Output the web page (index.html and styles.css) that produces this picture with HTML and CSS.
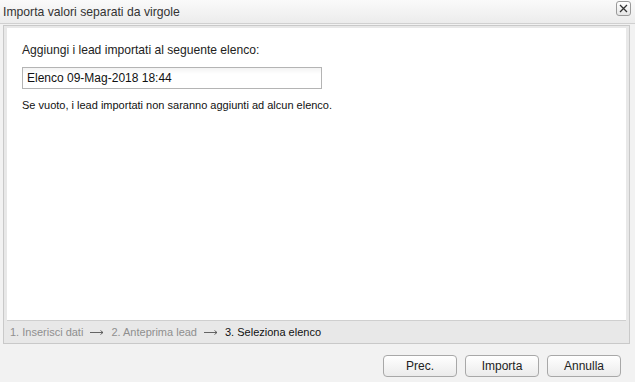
FILE: index.html
```html
<!DOCTYPE html>
<html lang="it">
<head>
    <meta charset="UTF-8">
    <meta name="viewport" content="width=device-width, initial-scale=1.0">
    <title>Importa valori separati da virgole</title>
    <link rel="stylesheet" href="styles.css">
</head>
<body>
    <div class="dialog">
        <div class="titlebar">
            <span class="title">Importa valori separati da virgole</span>
            <button class="close-btn" title="Chiudi">
                <svg width="9" height="9" viewBox="0 0 9 9">
                    <path d="M1 1 L8 8 M8 1 L1 8" stroke="#333" stroke-width="1.3" fill="none"/>
                </svg>
            </button>
        </div>
        <div class="panel">
            <div class="content">
                <label class="field-label" for="list-name">Aggiungi i lead importati al seguente elenco:</label>
                <input id="list-name" class="text-input" type="text" value="Elenco 09-Mag-2018 18:44">
                <p class="hint">Se vuoto, i lead importati non saranno aggiunti ad alcun elenco.</p>
            </div>
            <div class="steps">
                <span class="step done">1. Inserisci dati</span>
                <svg class="arrow" width="14" height="7" viewBox="0 0 14 7">
                    <path d="M0 3.5 H13 M10.5 1.5 L13 3.5 L10.5 5.5" stroke="#555" stroke-width="0.9" fill="none"/>
                </svg>
                <span class="step done">2. Anteprima lead</span>
                <svg class="arrow" width="14" height="7" viewBox="0 0 14 7">
                    <path d="M0 3.5 H13 M10.5 1.5 L13 3.5 L10.5 5.5" stroke="#555" stroke-width="0.9" fill="none"/>
                </svg>
                <span class="step current">3. Seleziona elenco</span>
            </div>
        </div>
        <div class="buttons">
            <button class="btn">Prec.</button>
            <button class="btn">Importa</button>
            <button class="btn">Annulla</button>
        </div>
    </div>
</body>
</html>
```

FILE: styles.css
```css
body {
    margin: 0;
    background: #f2f2f2;
    font-family: Tahoma, "Liberation Sans", Arial, sans-serif;
    color: #000;
}

.dialog {
    width: 635px;
    height: 382px;
    display: flex;
    flex-direction: column;
}

.titlebar {
    height: 24px;
    display: flex;
    align-items: center;
    justify-content: space-between;
    padding: 0 4px 0 3px;
    background: linear-gradient(#fafafa, #ececec);
    border-bottom: 1px solid #d0d0d0;
    box-sizing: border-box;
}

.title {
    font-size: 12.2px;
    color: #333;
}

.close-btn {
    width: 15px;
    height: 15px;
    padding: 0;
    display: flex;
    align-items: center;
    justify-content: center;
    border: 1px solid #9a9a9a;
    border-radius: 3px;
    background: linear-gradient(#ffffff, #e6e6e6);
    margin-top: -6px;
}

.panel {
    margin: 1px 5px 0 3px;
    border: 1px solid #c9c9c9;
    background: #e8e8e8;
    padding: 2px 3px 0 3px;
    display: flex;
    flex-direction: column;
    height: 319px;
    box-sizing: border-box;
}

.content {
    flex: 1;
    background: #fff;
    border-bottom: 1px solid #cfcfcf;
    padding: 15px 15px 0 15px;
}

.field-label {
    display: block;
    font-size: 12.1px;
    color: #222;
    margin-bottom: 10px;
}

.text-input {
    display: block;
    width: 300px;
    height: 22px;
    box-sizing: border-box;
    border: 1px solid #b4b4b4;
    background: linear-gradient(#f3f3f3, #fff 6px);
    font-family: inherit;
    font-size: 12px;
    padding: 0 4px;
    color: #111;
}

.hint {
    font-size: 11px;
    margin: 10px 0 0 0;
    color: #111;
}

.steps {
    height: 22px;
    display: flex;
    align-items: center;
    gap: 7px;
    padding-left: 3px;
    font-size: 11px;
}

.step.done {
    color: #8f8f8f;
}

.step.current {
    color: #111;
}

.arrow {
    margin: 1px 0 0 0;
}

.buttons {
    display: flex;
    justify-content: flex-end;
    gap: 8px;
    padding: 11px 14px 0 0;
}

.btn {
    width: 74px;
    height: 22px;
    border: 1px solid #a8a8a8;
    border-radius: 4px;
    background: linear-gradient(#ffffff, #ebebeb);
    font-family: inherit;
    font-size: 12px;
    color: #222;
    padding: 0;
}
```
